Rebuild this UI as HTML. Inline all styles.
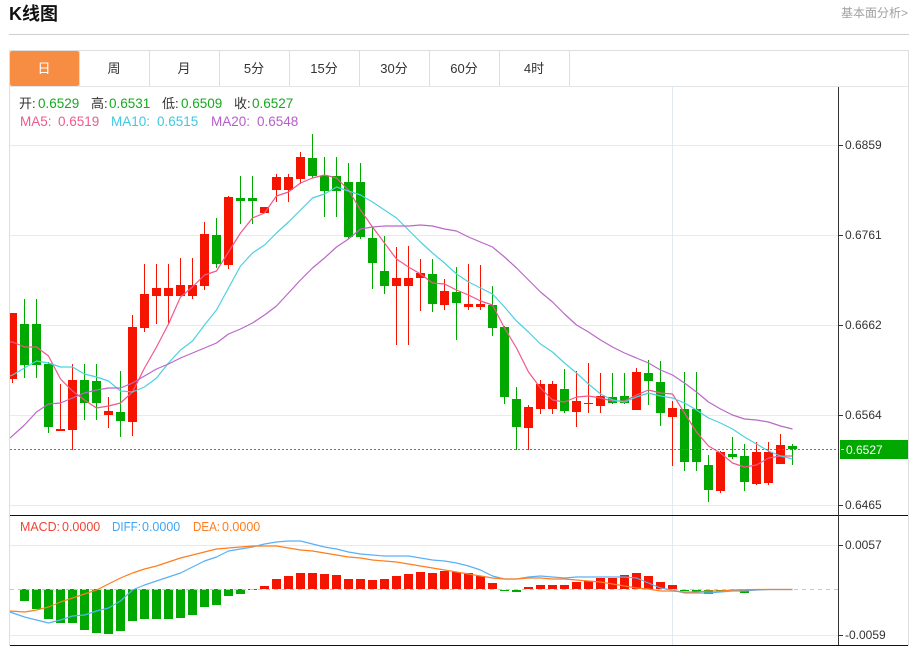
<!DOCTYPE html>
<html lang="zh">
<head>
<meta charset="utf-8">
<title>K线图</title>
<style>
html,body{margin:0;padding:0;background:#fff;width:914px;height:646px;overflow:hidden}
svg{display:block}
text{font-family:"Liberation Sans","Noto Sans CJK SC",sans-serif}
.c{shape-rendering:crispEdges}
.l{fill:none;stroke-width:1.2;stroke-linejoin:round}
</style>
</head>
<body>
<svg width="914" height="646" viewBox="0 0 914 646" xmlns="http://www.w3.org/2000/svg">
<defs><clipPath id="p"><rect x="10" y="87" width="828" height="558"/></clipPath></defs>
<text x="9" y="20" font-size="18" font-weight="700" fill="#111">K线图</text>
<text x="841" y="17" font-size="12" fill="#a0a0a0">基本面分析&gt;</text>
<g class="c">
<rect x="9" y="34" width="900" height="1" fill="#cfcfcf"/>
<path d="M9.5 50.5H908.5V646M9.5 50.5V646" fill="none" stroke="#dedede"/>
<path d="M10 86.5H908" stroke="#e3e6e9"/>
<path d="M79.5 51V86M149.5 51V86M219.5 51V86M289.5 51V86M359.5 51V86M429.5 51V86M499.5 51V86M569.5 51V86" stroke="#dedede"/>
</g>
<rect x="10" y="51" width="69" height="35" rx="2" fill="#f68d42"/>
<g font-size="13" fill="#333" text-anchor="middle">
<text x="44" y="73" fill="#fff">日</text>
<text x="114" y="73">周</text>
<text x="184" y="73">月</text>
<text x="254" y="73">5分</text>
<text x="324" y="73">15分</text>
<text x="394" y="73">30分</text>
<text x="464" y="73">60分</text>
<text x="534" y="73">4时</text>
</g>
<g class="c">
<path d="M10 145.5H838M10 235.5H838M10 325.5H838M10 415.5H838M10 505.5H838M10 545.5H838M10 635.5H838" stroke="#e6ebf1"/>
<path d="M672.5 87V645" stroke="#dfeaf3"/>
</g>
<g clip-path="url(#p)">
<g class="c">
<path fill="none" stroke="#f51400" d="M12.5 313V383M60.5 384V431M72.5 364V450M108.5 397V428M132.5 315V436M144.5 264V332M156.5 264V324M168.5 264V324M180.5 258V296M192.5 258V299M204.5 222V290M228.5 196V269M276.5 174V202M288.5 174V202M300.5 152V184M396.5 247V345M408.5 246V345M420.5 259V311M444.5 279V310M468.5 264V310M480.5 265V310M528.5 405V450M540.5 380V414M552.5 381V414M576.5 371V427M588.5 363V413M600.5 373V413M636.5 368V410M672.5 401V466M720.5 451V493M756.5 442V485M768.5 442V485M780.5 434V464"/>
<path fill="#f51400" d="M8 313h9v66h-9zM56 429h9v2h-9zM68 380h9v50h-9zM104 411h9v4h-9zM128 327h9v95h-9zM140 294h9v34h-9zM152 288h9v8h-9zM164 288h9v8h-9zM176 285h9v11h-9zM188 285h9v11h-9zM200 234h9v52h-9zM224 197h9v68h-9zM260 207h9v6h-9zM272 177h9v13h-9zM284 177h9v13h-9zM296 157h9v22h-9zM392 278h9v8h-9zM404 278h9v8h-9zM416 273h9v5h-9zM440 291h9v14h-9zM464 304h9v3h-9zM476 304h9v3h-9zM524 407h9v21h-9zM536 384h9v25h-9zM548 384h9v25h-9zM572 401h9v11h-9zM584 403h9v1h-9zM596 396h9v10h-9zM632 372h9v38h-9zM668 408h9v9h-9zM716 452h9v39h-9zM752 452h9v32h-9zM764 452h9v31h-9zM776 445h9v19h-9z"/>
<path fill="none" stroke="#00a800" d="M24.5 299V378M36.5 299V378M48.5 362V433M84.5 364V420M96.5 364V420M120.5 371V437M216.5 218V268M240.5 176V224M252.5 176V224M312.5 134V178M324.5 157V217M336.5 157V217M348.5 163V239M360.5 163V239M372.5 227V289M384.5 236V294M432.5 259V312M456.5 267V340M492.5 286V336M504.5 326V404M516.5 387V450M564.5 369V413M612.5 373V404M624.5 373V404M648.5 360V405M660.5 361V426M684.5 372V471M696.5 372V471M708.5 455V502M732.5 437V459M744.5 444V491M792.5 444V465"/>
<path fill="#00a800" d="M20 324h9v41h-9zM32 324h9v41h-9zM44 364h9v63h-9zM80 380h9v23h-9zM92 381h9v22h-9zM116 412h9v9h-9zM212 235h9v29h-9zM236 198h9v3h-9zM248 198h9v3h-9zM308 158h9v18h-9zM320 176h9v15h-9zM332 176h9v15h-9zM344 182h9v55h-9zM356 182h9v55h-9zM368 238h9v25h-9zM380 271h9v15h-9zM428 274h9v30h-9zM452 292h9v11h-9zM488 305h9v23h-9zM500 327h9v70h-9zM512 399h9v28h-9zM560 389h9v22h-9zM608 397h9v6h-9zM620 396h9v7h-9zM644 373h9v8h-9zM656 382h9v31h-9zM680 409h9v53h-9zM692 409h9v53h-9zM704 465h9v25h-9zM728 454h9v3h-9zM740 456h9v26h-9zM788 446h9v3h-9z"/>
</g>
<polyline class="l" stroke="#f0588b" points="10,342 12.5,342 24.5,347 36.5,347 48.5,356 60.5,379 72.5,391 84.5,400 96.5,408 108.5,406 120.5,403 132.5,392 144.5,368 156.5,347 168.5,324 180.5,297 192.5,287 204.5,275 216.5,271 228.5,252 240.5,233 252.5,218 264.5,213 276.5,196 288.5,192 300.5,183 312.5,178 324.5,175 336.5,178 348.5,190 360.5,210 372.5,227 384.5,243 396.5,259 408.5,267 420.5,274 432.5,283 444.5,284 456.5,290 468.5,295 480.5,301 492.5,305 504.5,328 516.5,348 528.5,372 540.5,388 552.5,400 564.5,402 576.5,397 588.5,396 600.5,398 612.5,401 624.5,401 636.5,395 648.5,390 660.5,393 672.5,394 684.5,413 696.5,432 708.5,446 720.5,453 732.5,463 744.5,467 756.5,465 768.5,458 780.5,456 792.5,456"/>
<polyline class="l" stroke="#4dd0e1" points="10,376 12.5,375 24.5,368 36.5,361 48.5,363 60.5,367 72.5,367 84.5,374 96.5,377 108.5,381 120.5,391 132.5,392 144.5,387 156.5,378 168.5,363 180.5,350 192.5,341 204.5,325 216.5,310 228.5,288 240.5,266 252.5,253 264.5,245 276.5,233 288.5,222 300.5,210 312.5,198 324.5,194 336.5,187 348.5,191 360.5,195 372.5,202 384.5,210 396.5,218 408.5,230 420.5,242 432.5,253 444.5,263 456.5,274 468.5,282 480.5,288 492.5,294 504.5,307 516.5,321 528.5,332 540.5,344 552.5,352 564.5,363 576.5,373 588.5,384 600.5,394 612.5,400 624.5,402 636.5,397 648.5,393 660.5,396 672.5,398 684.5,403 696.5,410 708.5,418 720.5,423 732.5,429 744.5,437 756.5,444 768.5,451 780.5,456 792.5,459"/>
<polyline class="l" stroke="#ba68c8" points="10,438 24.5,425 36.5,412 48.5,404 60.5,403 72.5,398 84.5,393 96.5,390 108.5,388 120.5,388 132.5,383 144.5,376 156.5,369 168.5,364 180.5,358 192.5,353 204.5,348 216.5,343 228.5,334 240.5,329 252.5,323 264.5,315 276.5,306 288.5,293 300.5,280 312.5,268 324.5,258 336.5,247 348.5,239 360.5,229 372.5,227 384.5,226 396.5,226 408.5,226 420.5,225 432.5,226 444.5,229 456.5,231 468.5,237 480.5,242 492.5,247 504.5,257 516.5,268 528.5,280 540.5,292 552.5,302 564.5,314 576.5,325 588.5,332 600.5,340 612.5,347 624.5,353 636.5,358 648.5,363 660.5,370 672.5,375 684.5,383 696.5,392 708.5,402 720.5,409 732.5,415 744.5,419 756.5,420 768.5,422 780.5,426 792.5,429"/>
</g>
<path class="c" d="M10 449.5H838" stroke="#2aa832" stroke-dasharray="2 2"/>
<g class="c">
<path fill="#00a800" d="M20 589h9v12h-9zM32 589h9v20h-9zM44 589h9v30h-9zM56 589h9v34h-9zM68 589h9v34h-9zM80 589h9v41h-9zM92 589h9v44h-9zM104 589h9v45h-9zM116 589h9v42h-9zM128 589h9v32h-9zM140 589h9v30h-9zM152 589h9v30h-9zM164 589h9v30h-9zM176 589h9v29h-9zM188 589h9v26h-9zM200 589h9v18h-9zM212 589h9v16h-9zM224 589h9v7h-9zM236 589h9v5h-9zM248 589h9v1h-9zM500 590h9v1h-9zM512 590h9v2h-9zM680 590h9v1h-9zM692 590h9v2h-9zM704 590h9v4h-9zM716 590h9v1h-9zM728 590h9v1h-9zM740 590h9v3h-9z"/>
<path fill="#f51400" d="M260 586h9v3h-9zM272 579h9v10h-9zM284 576h9v13h-9zM296 573h9v16h-9zM308 573h9v16h-9zM320 574h9v15h-9zM332 575h9v14h-9zM344 579h9v10h-9zM356 579h9v10h-9zM368 580h9v9h-9zM380 579h9v10h-9zM392 576h9v13h-9zM404 574h9v15h-9zM416 572h9v17h-9zM428 573h9v16h-9zM440 571h9v18h-9zM452 572h9v17h-9zM464 573h9v16h-9zM476 576h9v13h-9zM488 583h9v6h-9zM524 587h9v2h-9zM536 585h9v4h-9zM548 585h9v4h-9zM560 585h9v4h-9zM572 582h9v7h-9zM584 581h9v8h-9zM596 578h9v11h-9zM608 578h9v11h-9zM620 575h9v14h-9zM632 573h9v16h-9zM644 576h9v13h-9zM656 582h9v7h-9zM668 585h9v4h-9z"/>
<path d="M10 589.5H838" stroke="#9fd6ee" stroke-dasharray="4 4"/>
</g>
<polyline class="l" stroke="#5bb0f5" points="10,612 24.5,617 36.5,620 48.5,623 60.5,620 72.5,616 84.5,615 96.5,611 108.5,608 120.5,601 132.5,590 144.5,585 156.5,581 168.5,577 180.5,573 192.5,567 204.5,561 216.5,557 228.5,551 240.5,549 252.5,547 264.5,544 276.5,542 288.5,541 300.5,541 312.5,544 324.5,547 336.5,549 348.5,552 360.5,554 372.5,555 384.5,556 396.5,556 408.5,556 420.5,558 432.5,560 444.5,561 456.5,563 468.5,566 480.5,570 492.5,576 504.5,579 516.5,579 528.5,577 540.5,576 552.5,577 564.5,578 576.5,577 588.5,577 600.5,577 612.5,577 624.5,577 636.5,578 648.5,583 660.5,588 672.5,590 684.5,593 696.5,593 708.5,593 720.5,592 732.5,591 744.5,591 756.5,590 768.5,589.5 792.5,589.5"/>
<polyline class="l" stroke="#ff7d1f" points="10,611 24.5,612 36.5,610 48.5,607 60.5,602 72.5,598 84.5,594 96.5,590 108.5,584 120.5,578 132.5,573 144.5,569 156.5,566 168.5,562 180.5,558 192.5,555 204.5,552 216.5,549 228.5,548 240.5,547 252.5,546 264.5,546 276.5,546 288.5,548 300.5,550 312.5,551 324.5,553 336.5,555 348.5,557 360.5,558 372.5,560 384.5,561 396.5,562 408.5,564 420.5,566 432.5,568 444.5,570 456.5,572 468.5,574 480.5,576 492.5,578 504.5,579 516.5,579 528.5,578 540.5,578 552.5,579 564.5,579 576.5,580 588.5,581 600.5,582 612.5,584 624.5,586 636.5,588 648.5,589 660.5,591 672.5,591 684.5,592 696.5,592 708.5,591 720.5,591 732.5,590 756.5,589.5 792.5,589.5"/>
<g class="c">
<path d="M10 515.5H908M10 645.5H908" stroke="#111"/>
<path d="M838.5 87V645" stroke="#333"/>
<path d="M839 145.5h4M839 235.5h4M839 325.5h4M839 415.5h4M839 505.5h4M839 545.5h4M839 635.5h4" stroke="#333"/>
<rect x="840" y="440" width="68" height="19" fill="#00a800"/>
<path d="M841 449.5h3" stroke="#cfeccf"/>
</g>
<g font-size="12" fill="#333">
<text x="845" y="149">0.6859</text>
<text x="845" y="239">0.6761</text>
<text x="845" y="329">0.6662</text>
<text x="845" y="419">0.6564</text>
<text x="846" y="454" fill="#fff">0.6527</text>
<text x="845" y="509">0.6465</text>
<text x="845" y="549">0.0057</text>
<text x="845" y="639">-0.0059</text>
</g>
<g font-size="13" fill="#333">
<text x="19" y="108">开:</text><text x="91" y="108">高:</text><text x="162" y="108">低:</text><text x="234" y="108">收:</text>
</g>
<g font-size="13.5" fill="#16a91e">
<text x="38" y="108">0.6529</text><text x="109" y="108">0.6531</text><text x="181" y="108">0.6509</text><text x="252" y="108">0.6527</text>
</g>
<g font-size="13.5">
<text x="20" y="126" fill="#ef5a8c">MA5:</text><text x="58" y="126" fill="#ef5a8c">0.6519</text>
<text x="111" y="126" fill="#3ec9e2">MA10:</text><text x="157" y="126" fill="#3ec9e2">0.6515</text>
<text x="211" y="126" fill="#b55fca">MA20:</text><text x="257" y="126" fill="#b55fca">0.6548</text>
</g>
<g font-size="12.5">
<text x="20" y="531" fill="#f44336" textLength="40" lengthAdjust="spacingAndGlyphs">MACD:</text><text x="62" y="531" fill="#f44336">0.0000</text>
<text x="112" y="531" fill="#42a5f5" textLength="29" lengthAdjust="spacingAndGlyphs">DIFF:</text><text x="142" y="531" fill="#42a5f5">0.0000</text>
<text x="193" y="531" fill="#ff7d1f" textLength="27" lengthAdjust="spacingAndGlyphs">DEA:</text><text x="222" y="531" fill="#ff7d1f">0.0000</text>
</g>
</svg>
</body>
</html>
